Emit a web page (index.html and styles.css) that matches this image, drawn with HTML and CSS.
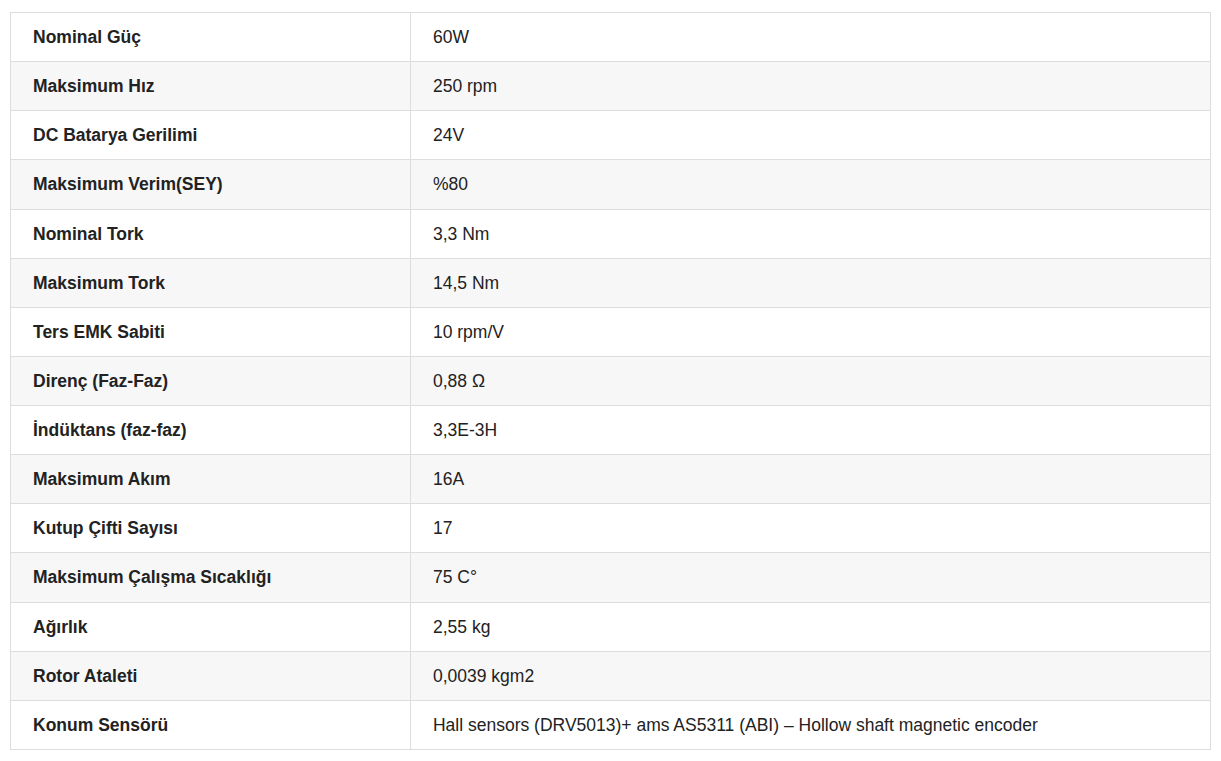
FILE: index.html
```html
<!DOCTYPE html>
<html lang="tr">
<head>
<meta charset="utf-8">
<title>Teknik Özellikler</title>
<link rel="stylesheet" href="styles.css">
</head>
<body>
<table class="spec">
  <colgroup>
    <col class="spec-key">
    <col class="spec-val">
  </colgroup>
  <tbody>
    <tr><th>Nominal Güç</th><td>60W</td></tr>
    <tr><th>Maksimum Hız</th><td>250 rpm</td></tr>
    <tr><th>DC Batarya Gerilimi</th><td>24V</td></tr>
    <tr><th>Maksimum Verim(SEY)</th><td>%80</td></tr>
    <tr><th>Nominal Tork</th><td>3,3 Nm</td></tr>
    <tr><th>Maksimum Tork</th><td>14,5 Nm</td></tr>
    <tr><th>Ters EMK Sabiti</th><td>10 rpm/V</td></tr>
    <tr><th>Direnç (Faz-Faz)</th><td>0,88 Ω</td></tr>
    <tr><th>İndüktans (faz-faz)</th><td>3,3E-3H</td></tr>
    <tr><th>Maksimum Akım</th><td>16A</td></tr>
    <tr><th>Kutup Çifti Sayısı</th><td>17</td></tr>
    <tr><th>Maksimum Çalışma Sıcaklığı</th><td>75 C°</td></tr>
    <tr><th>Ağırlık</th><td>2,55 kg</td></tr>
    <tr><th>Rotor Ataleti</th><td>0,0039 kgm2</td></tr>
    <tr><th>Konum Sensörü</th><td>Hall sensors (DRV5013)+ ams AS5311 (ABI) – Hollow shaft magnetic encoder</td></tr>
  </tbody>
</table>
</body>
</html>
```
FILE: styles.css
```css
html, body {
  background: #ffffff;
}
body {
  margin: 12px 10px;
  font-family: "Liberation Sans", Arial, sans-serif;
  font-size: 17.5px;
  color: #222222;
}
.spec {
  width: 100%;
  border-collapse: collapse;
  table-layout: fixed;
  border: 1px solid #dddddd;
}
.spec-key {
  width: 33.33%;
}
.spec th,
.spec td {
  border: 1px solid #dddddd;
  padding: 15px 22px;
  line-height: 18.13px;
  text-align: left;
  vertical-align: middle;
}
.spec th {
  font-weight: bold;
}
.spec td {
  font-weight: normal;
}
.spec tr:nth-child(even) {
  background: #f7f7f7;
}
```
